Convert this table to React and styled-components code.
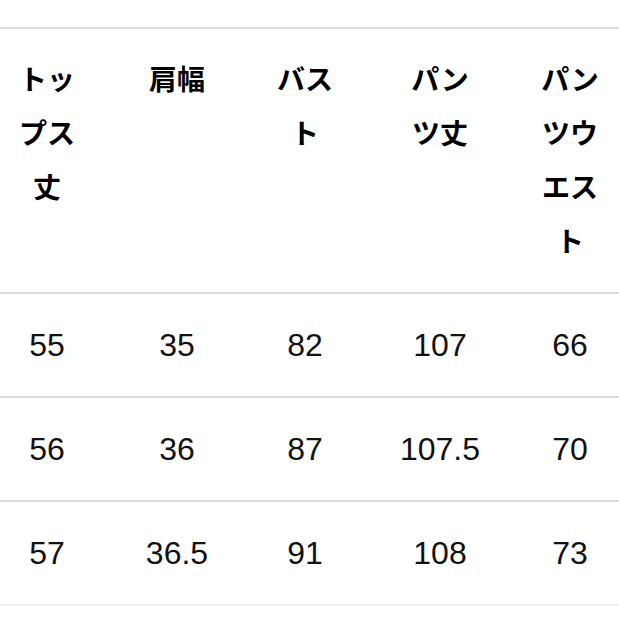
import React from 'react'
import styled, { createGlobalStyle } from 'styled-components'

const GlobalStyle = createGlobalStyle`
    html, body {
        margin: 0;
        padding: 0;
        background: #ffffff;
    }
`

const headers = ['トップス丈', '肩幅', 'バスト', 'パンツ丈', 'パンツウエスト']

const rows = [
    ['55', '35', '82', '107', '66'],
    ['56', '36', '87', '107.5', '70'],
    ['57', '36.5', '91', '108', '73'],
]

const Page = styled.div`
    width: 619px;
    height: 619px;
    padding-top: 27px;
    box-sizing: border-box;
    overflow: hidden;
`

const Row = styled.div`
    display: grid;
    grid-template-columns: 94px 166px 90px 180px 80px 1fr;
    border-top: 2px solid #dcdcdc;
    height: ${ props => props.head ? '263px' : '102px' };
    align-items: ${ props => props.head ? 'start' : 'center' };
    box-sizing: content-box;

    &:last-child {
        border-bottom: 2px solid #efefef;
    }
`

const HeadCell = styled.div`
    display: flex;
    justify-content: center;
    padding-top: 22px;
`

const HeadText = styled.span`
    display: block;
    width: 2.1em;
    font-family: "Noto Sans CJK JP", "Noto Sans", sans-serif;
    font-weight: 700;
    font-size: 28px;
    line-height: 54px;
    color: #000;
    text-align: center;
    word-break: break-all;
`

const Cell = styled.div`
    text-align: center;
    font-family: "Liberation Sans", Arial, sans-serif;
    font-size: 32px;
    line-height: 40px;
    color: #111;
`

export default function App() {
    return (
        <Page>
            <GlobalStyle />
            <Row head>
                { headers.map(h => (
                    <HeadCell key={ h }><HeadText>{ h }</HeadText></HeadCell>
                )) }
            </Row>
            { rows.map((r, i) => (
                <Row key={ i }>
                    { r.map((v, j) => <Cell key={ j }>{ v }</Cell>) }
                </Row>
            )) }
        </Page>
    )
}
